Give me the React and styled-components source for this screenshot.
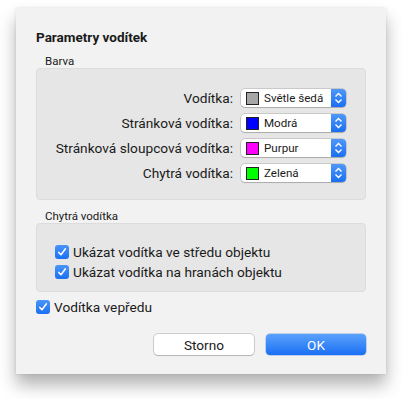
import React from "react";
import styled, { createGlobalStyle } from "styled-components";

const GlobalStyle = createGlobalStyle`
  html, body {
    margin: 0;
    padding: 0;
    background: #ffffff;
  }
  body {
    font-family: "Roboto", "Liberation Sans", sans-serif;
    color: #1a1a1a;
  }
`;

const Page = styled.div`
  width: 402px;
  height: 399px;
  padding: 8px 0 0 16px;
  box-sizing: border-box;
`;

const Dialog = styled.div`
  width: 370px;
  height: 366px;
  box-sizing: border-box;
  background: #f2f2f2;
  padding: 21px 20px 19px 20px;
  display: flex;
  flex-direction: column;
  box-shadow: 0 11px 16px rgba(0, 0, 0, 0.3), 0 0 3px rgba(0, 0, 0, 0.1);
`;

const Title = styled.div`
  font-size: 13.5px;
  font-weight: 700;
  line-height: 16px;
  height: 16px;
`;

const GroupLabel = styled.div`
  font-size: 11.5px;
  line-height: 12px;
  padding-left: 9px;
  margin-top: ${(p) => p.$top}px;
  margin-bottom: 1px;
`;

const GroupBox = styled.div`
  background: #e6e6e6;
  border: 1px solid #dcdcdc;
  border-radius: 4px;
  box-sizing: border-box;
  height: ${(p) => p.$h}px;
  padding: ${(p) => p.$pad};
  display: flex;
  flex-direction: column;
  gap: ${(p) => p.$gap}px;
`;

const Row = styled.div`
  display: flex;
  align-items: center;
  justify-content: flex-end;
  height: 18px;
  padding-right: 19px;
`;

const RowLabel = styled.span`
  font-size: 13.7px;
  margin-right: 8px;
`;

const Popup = styled.div`
  width: 105px;
  height: 18px;
  box-sizing: border-box;
  background: #ffffff;
  border-radius: 4px;
  box-shadow: 0 0 0 0.5px rgba(0, 0, 0, 0.25), 0 1px 1px rgba(0, 0, 0, 0.15);
  display: flex;
  align-items: center;
  overflow: hidden;
`;

const Swatch = styled.span`
  width: 11px;
  height: 11px;
  margin-left: 5px;
  border: 1px solid #222;
  background: ${(p) => p.$color};
  flex-shrink: 0;
`;

const PopupText = styled.span`
  font-size: 11.6px;
  margin-left: 5px;
  flex: 1;
  white-space: nowrap;
`;

const Stepper = styled.span`
  width: 15px;
  height: 100%;
  background: linear-gradient(#4f98fa, #1a6ff2);
  display: flex;
  align-items: center;
  justify-content: center;
`;

const CheckRow = styled.div`
  display: flex;
  align-items: center;
  height: 20px;
  padding-left: ${(p) => p.$indent}px;
  margin-top: ${(p) => p.$top || 0}px;
`;

const CheckBox = styled.span`
  width: 14px;
  height: 14px;
  border-radius: 3px;
  background: linear-gradient(#4a94fa, #1b70f2);
  display: flex;
  align-items: center;
  justify-content: center;
  margin-right: 4px;
  flex-shrink: 0;
`;

const CheckText = styled.span`
  font-size: 13.7px;
`;

const Buttons = styled.div`
  margin-top: auto;
  display: flex;
  justify-content: flex-end;
  gap: 12px;
`;

const Button = styled.button`
  width: 100px;
  height: 21px;
  border-radius: 4px;
  font-family: inherit;
  font-size: 13.6px;
  padding: 0;
  border: none;
  background: ${(p) => (p.$primary ? "linear-gradient(#5ba2fc, #1a6ff4)" : "#ffffff")};
  color: ${(p) => (p.$primary ? "#ffffff" : "#1a1a1a")};
  box-shadow: ${(p) =>
    p.$primary
      ? "0 0 0 0.5px rgba(0,60,200,0.4)"
      : "0 0 0 0.5px rgba(0,0,0,0.3), 0 1px 1px rgba(0,0,0,0.12)"};
`;

const Chevrons = () => (
  <svg width="9" height="12" viewBox="0 0 9 12">
    <path d="M1.5 4.5 L4.5 1.5 L7.5 4.5 M1.5 7.5 L4.5 10.5 L7.5 7.5" fill="none" stroke="#fff" strokeWidth="1.4" />
  </svg>
);

const Check = () => (
  <svg width="10" height="10" viewBox="0 0 10 10">
    <path d="M1.8 5.4 L4 7.8 L8.4 1.8" fill="none" stroke="#fff" strokeWidth="1.5" strokeLinecap="round" strokeLinejoin="round" />
  </svg>
);

const rows = [
  { label: "Vodítka:", color: "#a6a6a6", text: "Světle šedá" },
  { label: "Stránková vodítka:", color: "#0000ff", text: "Modrá" },
  { label: "Stránková sloupcová vodítka:", color: "#ff00ff", text: "Purpur" },
  { label: "Chytrá vodítka:", color: "#00ff00", text: "Zelená" },
];

export default function App() {
  return (
    <>
      <GlobalStyle />
      <Page>
        <Dialog>
          <Title>Parametry vodítek</Title>
          <GroupLabel $top={10}>Barva</GroupLabel>
          <GroupBox $h={132} $pad="20px 0 0 0" $gap={7}>
            {rows.map((r) => (
              <Row key={r.label}>
                <RowLabel>{r.label}</RowLabel>
                <Popup>
                  <Swatch $color={r.color} />
                  <PopupText>{r.text}</PopupText>
                  <Stepper>
                    <Chevrons />
                  </Stepper>
                </Popup>
              </Row>
            ))}
          </GroupBox>
          <GroupLabel $top={10}>Chytrá vodítka</GroupLabel>
          <GroupBox $h={69} $pad="18px 0 0 0" $gap={0}>
            <CheckRow $indent={18}>
              <CheckBox><Check /></CheckBox>
              <CheckText>Ukázat vodítka ve středu objektu</CheckText>
            </CheckRow>
            <CheckRow $indent={18}>
              <CheckBox><Check /></CheckBox>
              <CheckText>Ukázat vodítka na hranách objektu</CheckText>
            </CheckRow>
          </GroupBox>
          <CheckRow $indent={0} $top={5}>
            <CheckBox><Check /></CheckBox>
            <CheckText>Vodítka vepředu</CheckText>
          </CheckRow>
          <Buttons>
            <Button>Storno</Button>
            <Button $primary>OK</Button>
          </Buttons>
        </Dialog>
      </Page>
    </>
  );
}
